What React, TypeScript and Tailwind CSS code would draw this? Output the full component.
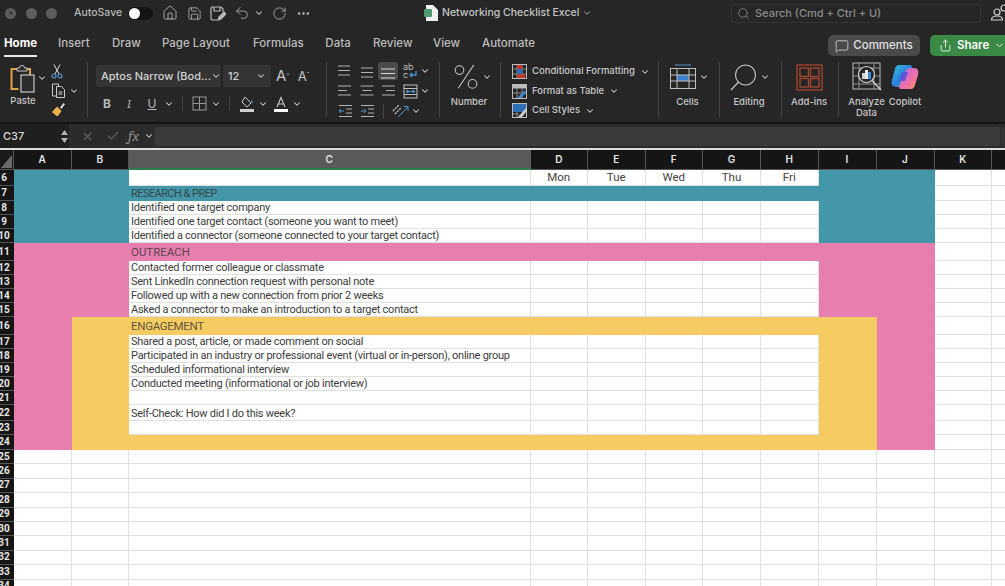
import { ChevronDown, Home, Save, Undo2, RotateCw, Ellipsis, Search, MessageSquare, Share, X, Check } from "lucide-react";
import type { ReactNode } from "react";

const ui = "font-['Inter','Liberation_Sans',sans-serif]";
const cols = "grid grid-cols-[14px_57.5px_57.5px_401.5px_57.5px_57.5px_57.5px_58px_57.5px_58px_58px_57.5px_57.5px]";

const rows = [
  { n: 6, h: "h-[16px]" },
  { n: 7, h: "h-[15px]", head: "RESEARCH & PREP", headClass: "text-[11px] tracking-[-0.55px]" },
  { n: 8, h: "h-[14px]", text: "Identified one target company" },
  { n: 9, h: "h-[14px]", text: "Identified one target contact (someone you want to meet)" },
  { n: 10, h: "h-[14px]", text: "Identified a connector (someone connected to your target contact)" },
  { n: 11, h: "h-[18px]", head: "OUTREACH", headClass: "pt-[2px] text-[11.5px]" },
  { n: 12, h: "h-[14px]", text: "Contacted former colleague or classmate" },
  { n: 13, h: "h-[14px]", text: "Sent LinkedIn connection request with personal note" },
  { n: 14, h: "h-[14px]", text: "Followed up with a new connection from prior 2 weeks" },
  { n: 15, h: "h-[14px]", text: "Asked a connector to make an introduction to a target contact" },
  { n: 16, h: "h-[18px]", head: "ENGAGEMENT", headClass: "pt-[2px] text-[11.5px] tracking-[-0.3px]" },
  { n: 17, h: "h-[14px]", text: "Shared a post, article, or made comment on social" },
  { n: 18, h: "h-[14px]", text: "Participated in an industry or professional event (virtual or in-person), online group" },
  { n: 19, h: "h-[14px]", text: "Scheduled informational interview" },
  { n: 20, h: "h-[14px]", text: "Conducted meeting (informational or job interview)" },
  { n: 21, h: "h-[14px]" },
  { n: 22, h: "h-[16px]", text: "Self-Check: How did I do this week?" },
  { n: 23, h: "h-[14px]" },
  { n: 24, h: "h-[15px]" },
  ...[25, 26, 27, 28, 29, 30, 31, 32, 33, 34].map((n) => ({ n, h: "h-[14.4px]" })),
] as { n: number; h: string; head?: string; headClass?: string; text?: string }[];

const days: Record<number, string> = { 4: "Mon", 5: "Tue", 6: "Wed", 7: "Thu", 8: "Fri" };
const letters = ["A", "B", "C", "D", "E", "F", "G", "H", "I", "J", "K", ""];

const teal = "bg-[#4397a8]";
const pink = "bg-[#e67fae]";
const yellow = "bg-[#f5cb62]";

// col index: 1 = A ... 10 = J
function fill(row: number, col: number) {
  if (row >= 25 || col > 10) return "";
  if (row <= 10) {
    if (col <= 2 || col >= 9 || row === 7) return teal;
    return "";
  }
  if (row <= 15) {
    if (col <= 2 || col >= 9 || row === 11) return pink;
    return "";
  }
  if (col === 1 || col === 10) return pink;
  if (col === 2 || col === 9 || row === 16 || row === 24) return yellow;
  return "";
}

function Chev({ className = "" }: { className?: string }) {
  return <ChevronDown size={10} strokeWidth={2.5} className={`shrink-0 text-[#d0d0d0] ${className}`} />;
}

function Sep() {
  return <div className="h-[55px] w-px shrink-0 self-center bg-[#454545]" />;
}

// fixed width box that centers an icon
function Slot({ w, children, className = "" }: { w: string; children: ReactNode; className?: string }) {
  return <div className={`flex shrink-0 items-center justify-center ${w} ${className}`}>{children}</div>;
}

function Lines({ w = [14, 14, 14], align = "l", color = "#b0b0b0" }: { w?: number[]; align?: "l" | "c" | "r"; color?: string }) {
  return (
    <svg width="16" height="14" viewBox="0 0 16 14">
      {w.map((len, i) => {
        const x = align === "l" ? 1 : align === "c" ? 8 - len / 2 : 15 - len;
        return <rect key={i} x={x} y={1.5 + i * 4.5} width={len} height="1" fill={color} />;
      })}
    </svg>
  );
}

function PasteIcon() {
  return (
    <svg width="26" height="28" viewBox="0 0 26 28" fill="none">
      <path d="M7 4H1.500v20h7" stroke="#e0a24a" strokeWidth="2" />
      <path d="M16 4h4v6" stroke="#e0a24a" strokeWidth="2" />
      <path d="M7 3h2.500a2.500 2.500 0 0 1 5 0H17v3H7z" stroke="#c9c9c9" strokeWidth="1" fill="#262626" />
      <rect x="11" y="10" width="13" height="17" fill="#2c2c2c" stroke="#c9c9c9" strokeWidth="1.200" />
    </svg>
  );
}

function ScissorsIcon() {
  return (
    <svg width="12" height="15" viewBox="0 0 12 15" fill="none">
      <path d="M3 0.500 8 10M9 0.500 4 10" stroke="#d8d8d8" />
      <circle cx="3" cy="12" r="2" stroke="#5d96cf" strokeWidth="1.200" />
      <circle cx="9" cy="12" r="2" stroke="#5d96cf" strokeWidth="1.200" />
    </svg>
  );
}

function CopyIcon() {
  return (
    <svg width="16" height="15" viewBox="0 0 16 15" fill="none" stroke="#c9c9c9">
      <path d="M1.500 1h6v12h-6z" />
      <path d="M5.500 3.500h5l3 3v8h-8z" fill="#262626" />
      <path d="M7.500 9h4M7.500 11h4" />
    </svg>
  );
}

function BrushIcon() {
  return (
    <svg width="15" height="15" viewBox="0 0 15 15" fill="none">
      <path d="M9 5.500 12.500 1l1.500 1.300L10.500 7" fill="#d8d8d8" />
      <path d="M6 4.500 10.500 9 7 14H5.500L1 10z" fill="#eab04f" />
    </svg>
  );
}

function BordersIcon() {
  return (
    <svg width="15" height="15" viewBox="0 0 15 15" fill="none" stroke="#9a9a9a">
      <rect x="1" y="1" width="13" height="13" />
      <path d="M7.500 1v13M1 7.500h13" />
    </svg>
  );
}

function FillIcon() {
  return (
    <svg width="16" height="16" viewBox="0 0 16 16" fill="none">
      <path d="M6 1 12 7l-4 4-5-5z" stroke="#c9c9c9" />
      <path d="M12.500 3.500c1 1.500 2 2.500 1 3.500s-1.500-.5-1-3.500z" fill="#4a90c9" />
      <rect x="1" y="13" width="14" height="3" fill="#d0d0d0" />
    </svg>
  );
}

function FontColorIcon() {
  return (
    <svg width="16" height="16" viewBox="0 0 16 16" fill="none">
      <path d="M4 11 8 1.500 12 11M5.500 8h5" stroke="#c9c9c9" strokeWidth="1.100" />
      <rect x="1" y="13" width="14" height="3" fill="#fff" />
    </svg>
  );
}

function WrapIcon() {
  return (
    <svg width="16" height="17" viewBox="0 0 16 17" fill="none">
      <text x="1" y="7" fontSize="9" fill="#bdbdbd">ab</text>
      <text x="1" y="15" fontSize="9" fill="#bdbdbd">c</text>
      <path d="M14 8v4H8m2-2-2 2 2 2" stroke="#4a90c9" strokeWidth="1.300" />
    </svg>
  );
}

function MergeIcon() {
  return (
    <svg width="15" height="15" viewBox="0 0 15 15" fill="none">
      <rect x="1" y="1" width="13" height="13" stroke="#bdbdbd" />
      <path d="M1 4.500h13M1 10.500h13" stroke="#bdbdbd" />
      <path d="M3 7.500h9M3 7.500l2-1.500v3zM12 7.500l-2-1.500v3z" stroke="#4a90c9" />
    </svg>
  );
}

function IndentIcon({ flip = false }: { flip?: boolean }) {
  return (
    <svg width="15" height="14" viewBox="0 0 15 14" fill="none">
      <path d="M1 1.500h13M8 5h6M8 9h6M1 12.500h13" stroke="#b0b0b0" />
      <path d={flip ? "M1 7h5M4 5l2 2-2 2" : "M6 7H1M3 5 1 7l2 2"} stroke="#4a90c9" />
    </svg>
  );
}

function OrientIcon() {
  return (
    <svg width="18" height="16" viewBox="0 0 18 16" fill="none">
      <path d="M1 8 7 2M3 11l6-6" stroke="#bdbdbd" strokeWidth="1.400" strokeDasharray="2 1" />
      <path d="M6 14 16 4M11.500 3.500H16V8" stroke="#4a90c9" />
    </svg>
  );
}

function GridStyle({ kind }: { kind: "cond" | "table" | "cell" }) {
  return (
    <svg width="15" height="15" viewBox="0 0 15 15" fill="none">
      <rect x="0.500" y="0.500" width="14" height="14" stroke="#bdbdbd" />
      {kind === "cond" ? (
        <>
          <path d="M5 1v13M10 1v13M1 5h13M1 10h13" stroke="#8a8a8a" />
          <rect x="5" y="1" width="5" height="4" fill="#c0392b" />
          <rect x="5" y="5" width="5" height="5" fill="#2f6fb8" />
          <rect x="5" y="10" width="8" height="4" fill="#c0392b" />
        </>
      ) : kind === "table" ? (
        <>
          <rect x="1" y="1" width="13" height="3.500" fill="#bdbdbd" />
          <path d="M5 4v10M10 4v10M1 9h13" stroke="#8a8a8a" />
          <path d="M5 14 13 6l1 3-5 5z" fill="#3f86c9" />
        </>
      ) : (
        <>
          <rect x="1" y="1" width="13" height="8" fill="#2f6fb8" />
          <path d="M5 9v5M1 11h6" stroke="#8a8a8a" />
          <path d="M6 14 14 5v4l-4 5z" fill="#d0d0d0" />
        </>
      )}
    </svg>
  );
}

function CellsIcon() {
  return (
    <svg width="26" height="26" viewBox="0 0 26 26" fill="none">
      <path d="M6 1h14M6 0v2M20 0v2" stroke="#4a90c9" />
      <rect x="0.500" y="4.500" width="25" height="20" stroke="#bdbdbd" />
      <rect x="7" y="11" width="12" height="6" fill="#3f7fd0" />
      <path d="M7 5v19M19 5v19M1 11h24M1 17h24" stroke="#bdbdbd" />
    </svg>
  );
}

function EditingIcon() {
  return (
    <svg width="27" height="27" viewBox="0 0 27 27" fill="none" stroke="#c9c9c9" strokeWidth="1.100">
      <circle cx="15.500" cy="11" r="10" />
      <path d="M8.500 18 1 26" />
    </svg>
  );
}

function AddinsIcon() {
  return (
    <svg width="27" height="27" viewBox="0 0 27 27" fill="none" stroke="#a8452c" strokeWidth="1.300">
      <rect x="1" y="1" width="25" height="25" />
      <rect x="4" y="4" width="8.500" height="8.500" />
      <rect x="14.500" y="4" width="8.500" height="8.500" />
      <rect x="4" y="14.500" width="8.500" height="8.500" />
      <rect x="14.500" y="14.500" width="8.500" height="8.500" />
    </svg>
  );
}

function AnalyzeIcon() {
  return (
    <svg width="30" height="30" viewBox="0 0 30 30" fill="none">
      <rect x="1" y="1" width="27" height="26" stroke="#bdbdbd" />
      <path d="M1 6h27M1 22h27M7 1v26M22 1v26M1 14h6M22 14h6" stroke="#8f8f8f" />
      <circle cx="14.500" cy="12.500" r="8" fill="#262626" stroke="#d5d5d5" strokeWidth="1.200" />
      <rect x="10" y="11" width="3" height="6" fill="#d0d0d0" />
      <rect x="13" y="8" width="3" height="9" fill="#e8e8e8" />
      <rect x="16" y="10" width="3" height="7" fill="#3f86d8" />
      <path d="M20 18.500 29 28" stroke="#d5d5d5" strokeWidth="1.300" />
    </svg>
  );
}

function CopilotIcon() {
  return (
    <svg width="28" height="26" viewBox="0 0 28 26">
      <defs>
        <linearGradient id="cpA" x1="0" y1="0" x2="1" y2="1">
          <stop offset="0" stopColor="#37c3d8" />
          <stop offset="0.55" stopColor="#2b7de0" />
          <stop offset="1" stopColor="#9ad05a" />
        </linearGradient>
        <linearGradient id="cpB" x1="0" y1="0" x2="1" y2="1">
          <stop offset="0" stopColor="#b06fe8" />
          <stop offset="0.6" stopColor="#ee6fa8" />
          <stop offset="1" stopColor="#f6a04d" />
        </linearGradient>
      </defs>
      <path d="M8 1h11c2 0 2.500 2 1.500 4L15 19c-1 3-3 4-5 4H5c-4 0-5-3-4-7L4 5c.7-2.500 2-4 4-4z" fill="url(#cpA)" />
      <path d="M20 25H10c-2 0-2-2-1.500-3.500L14 8c1-3 3-4 5-4h4c4 0 5 3 4 7l-3 10c-.7 2.500-2 4-4 4z" fill="url(#cpB)" />
      <path d="M11 8h6l-3 9H8z" fill="#5a4fd8" opacity="0.85" />
    </svg>
  );
}

function ExcelDocIcon() {
  return (
    <svg width="14" height="16" viewBox="0 0 14 16" className="shrink-0">
      <path d="M2 0h7l5 5v11H2z" fill="#f2f2f2" />
      <rect x="0" y="4" width="8" height="8" rx="1" fill="#4f9a6e" />
    </svg>
  );
}

function PeopleIcon() {
  return (
    <svg width="20" height="18" viewBox="0 0 20 18" fill="none" stroke="#d0d0d0" strokeWidth="1.200">
      <circle cx="7" cy="8" r="3" />
      <path d="M1.500 16c0-2.500 2-4 5.500-4s5.500 1.500 5.500 4z" />
      <circle cx="14" cy="4" r="3" />
    </svg>
  );
}

function TitleBar() {
  return (
    <div className="flex h-[26px] items-center text-[#b8b8b8]">
      <div className="ml-[5px] flex w-[52px] shrink-0 justify-between">
        <span className="flex size-[11px] items-center justify-center rounded-full bg-[#5d5d5d]">
          <span className="size-[4px] rounded-full bg-[#3c3c3c]" />
        </span>
        <span className="size-[11px] rounded-full bg-[#5d5d5d]" />
        <span className="size-[11px] rounded-full bg-[#5d5d5d]" />
      </div>
      <span className="ml-[17px] w-[50px] shrink-0 text-[10.5px] font-medium">AutoSave</span>
      <div className="ml-[4px] flex h-[13px] w-[25px] shrink-0 items-center rounded-full bg-[#141414]">
        <span className="ml-[1px] size-[11px] rounded-full bg-white" />
      </div>
      <Slot w="w-[16px]" className="ml-[9px]"><Home size={16} strokeWidth={1.3} /></Slot>
      <Slot w="w-[16px]" className="ml-[8px]"><Save size={15} strokeWidth={1.3} /></Slot>
      <Slot w="w-[16px]" className="ml-[8px]">
        <svg width="16" height="15" viewBox="0 0 16 15" fill="none" stroke="currentColor" strokeWidth="1.200">
          <path d="M13 6V3l-2-2H2L1 2v11l1 1h5" />
          <path d="M4 1v4h6V1" />
          <path d="M8 14l1-3 5-5 2 2-5 5z" fill="currentColor" />
        </svg>
      </Slot>
      <Slot w="w-[16px]" className="ml-[8px]"><Undo2 size={18} strokeWidth={1.2} /></Slot>
      <Slot w="w-[10px]" className="ml-[4px]"><Chev /></Slot>
      <Slot w="w-[16px]" className="ml-[7px]"><RotateCw size={15} strokeWidth={1.3} /></Slot>
      <Slot w="w-[16px]" className="ml-[8px]"><Ellipsis size={15} /></Slot>
      <div className="ml-[113px] flex w-[170px] shrink-0 items-center text-[10.5px] font-medium text-[#c4c4c4]">
        <ExcelDocIcon />
        <span className="ml-[4px] whitespace-nowrap">Networking Checklist Excel</span>
        <ChevronDown size={10} className="ml-[3px] shrink-0" />
      </div>
      <div className="ml-[137px] flex h-[19px] w-[250px] shrink-0 items-center rounded-[4px] border border-[#333] pl-[5px] text-[11px] font-medium text-[#8c8c8c]">
        <Search size={13} strokeWidth={1.5} />
        <span className="ml-[5px] whitespace-nowrap">Search (Cmd + Ctrl + U)</span>
      </div>
      <div className="ml-[9px] shrink-0"><PeopleIcon /></div>
    </div>
  );
}

function TabBar() {
  const tabs = [
    ["Insert", "w-[31px]", "ml-[21px]"],
    ["Draw", "w-[28px]", "ml-[23px]"],
    ["Page Layout", "w-[67px]", "ml-[22px]"],
    ["Formulas", "w-[50px]", "ml-[24px]"],
    ["Data", "w-[26px]", "ml-[22px]"],
    ["Review", "w-[38px]", "ml-[22px]"],
    ["View", "w-[26px]", "ml-[22px]"],
    ["Automate", "w-[53px]", "ml-[23px]"],
  ];
  return (
    <div className="flex h-[30px] items-start text-[11.5px] font-medium text-[#bdbdbd]">
      <div className="ml-[4px] mt-[9px] w-[33px] shrink-0 border-b-2 border-[#e8e8e8] pb-[3px] text-center font-bold text-white">Home</div>
      {tabs.map(([t, w, ml]) => (
        <div key={t} className={`mt-[9px] shrink-0 whitespace-nowrap text-center ${w} ${ml}`}>{t}</div>
      ))}
      <div className="ml-[293px] mt-[9px] flex h-[21px] w-[92px] shrink-0 items-center justify-center gap-[4px] rounded-[5px] bg-[#4a4a4a] text-[#e0e0e0]">
        <MessageSquare size={14} strokeWidth={1.3} />
        <span>Comments</span>
      </div>
      <div className="ml-[10px] mt-[9px] flex h-[21px] w-[80px] shrink-0 items-center rounded-l-[5px] bg-[#3a8a45] pl-[9px] font-semibold text-white">
        <Share size={13} strokeWidth={1.5} />
        <span className="ml-[5px]">Share</span>
        <ChevronDown size={11} className="ml-[5px]" />
      </div>
    </div>
  );
}

function Clipboard() {
  return (
    <div className="flex w-[87px] shrink-0">
      <div className="ml-[8px] mt-[9px] flex w-[30px] flex-col items-center">
        <PasteIcon />
        <span className="mt-[1px] text-[9.5px] font-medium">Paste</span>
      </div>
      <Chev className="ml-[-1px] mt-[17px]" />
      <div className="ml-[4px] mt-[8px] flex flex-col">
        <ScissorsIcon />
        <div className="mt-[4px] flex items-center gap-[2px]"><CopyIcon /><Chev /></div>
        <div className="mt-[4px]"><BrushIcon /></div>
      </div>
    </div>
  );
}

function FontGroup() {
  return (
    <div className="w-[238px] shrink-0 pl-[8px] pt-[9px]">
      <div className="flex items-center">
        <div className="flex h-[22px] w-[125px] items-center justify-between rounded-[3px] bg-[#343434] px-[5px] text-[11px] font-medium text-[#d0d0d0]">
          <span className="whitespace-nowrap">Aptos Narrow (Bod...</span><Chev />
        </div>
        <div className="ml-[2px] flex h-[22px] w-[48px] items-center justify-between rounded-[3px] bg-[#343434] px-[5px] text-[11px] font-medium text-[#d0d0d0]">
          <span>12</span><Chev />
        </div>
        <span className="ml-[5px] text-[15px] text-[#c4c4c4]">A<sup className="text-[7px] text-[#7fa9d6]">^</sup></span>
        <span className="ml-[8px] text-[13px] text-[#c4c4c4]">A<sup className="text-[7px] text-[#7fa9d6]">ˇ</sup></span>
      </div>
      <div className="mt-[6px] flex h-[20px] items-center text-[12px] text-[#b5b5b5]">
        <Slot w="w-[10px]" className="ml-[6px] font-bold">B</Slot>
        <Slot w="w-[10px]" className="ml-[12px] font-serif italic">I</Slot>
        <Slot w="w-[10px]" className="ml-[13px] underline">U</Slot>
        <Chev className="ml-[7px]" />
        <div className="ml-[8px] h-[15px] w-px bg-[#454545]" />
        <Slot w="w-[15px]" className="ml-[9px]"><BordersIcon /></Slot>
        <Chev className="ml-[4px]" />
        <div className="ml-[8px] h-[15px] w-px bg-[#454545]" />
        <Slot w="w-[16px]" className="ml-[9px]"><FillIcon /></Slot>
        <Chev className="ml-[3px]" />
        <Slot w="w-[16px]" className="ml-[5px]"><FontColorIcon /></Slot>
        <Chev className="ml-[3px]" />
      </div>
    </div>
  );
}

function AlignGroup() {
  return (
    <div className="flex w-[112px] shrink-0 flex-col pl-[10px] pt-[6px]">
      <div className="flex h-[18px] items-center">
        <Slot w="w-[16px]"><Lines w={[12, 12, 12]} /></Slot>
        <Slot w="w-[16px]" className="ml-[6px]"><div className="pt-[3px]"><Lines w={[12, 12, 12]} align="c" /></div></Slot>
        <Slot w="w-[20px]" className="ml-[3px] h-[18px] rounded-[3px] bg-[#4b4b4b]"><div className="pt-[5px]"><Lines w={[14, 14, 14]} align="c" color="#d8d8d8" /></div></Slot>
        <Slot w="w-[16px]" className="ml-[4px]"><WrapIcon /></Slot>
        <Chev className="ml-[2px]" />
      </div>
      <div className="mt-[2px] flex h-[18px] items-center">
        <Slot w="w-[16px]"><Lines w={[13, 9, 13]} /></Slot>
        <Slot w="w-[16px]" className="ml-[6px]"><Lines w={[13, 9, 13]} align="c" /></Slot>
        <Slot w="w-[16px]" className="ml-[5px]"><Lines w={[13, 9, 13]} align="r" /></Slot>
        <Slot w="w-[16px]" className="ml-[6px]"><MergeIcon /></Slot>
        <Chev className="ml-[2px]" />
      </div>
      <div className="mt-[2px] flex h-[18px] items-center">
        <Slot w="w-[16px]"><IndentIcon /></Slot>
        <Slot w="w-[16px]" className="ml-[6px]"><IndentIcon flip /></Slot>
        <div className="ml-[8px] h-[15px] w-px bg-[#454545]" />
        <Slot w="w-[18px]" className="ml-[8px]"><OrientIcon /></Slot>
        <Chev className="ml-[1px]" />
      </div>
    </div>
  );
}

function BigButton({ label, width, icon, chev = true, pl }: { label: ReactNode; width: string; icon: ReactNode; chev?: boolean; pl: string }) {
  return (
    <div className={`flex shrink-0 flex-col items-center ${width}`}>
      <div className={`flex h-[36px] items-center ${pl}`}>
        {icon}
        {chev && <Chev className="ml-[3px]" />}
      </div>
      <div className="mt-[1px] text-center text-[9.5px] font-medium leading-[11px]">{label}</div>
    </div>
  );
}

function StylesGroup() {
  const items: ["cond" | "table" | "cell", string][] = [
    ["cond", "Conditional Formatting"],
    ["table", "Format as Table"],
    ["cell", "Cell Styles"],
  ];
  return (
    <div className="flex w-[157px] shrink-0 flex-col gap-[4.5px] pl-[11px] pt-[8px]">
      {items.map(([k, t]) => (
        <div key={k} className="flex h-[15px] items-center">
          <GridStyle kind={k} />
          <span className="ml-[5px] whitespace-nowrap text-[9.5px] font-medium">{t}</span>
          <Chev className="ml-[5px]" />
        </div>
      ))}
    </div>
  );
}

function Ribbon() {
  return (
    <div className="flex h-[68px] border-b-2 border-[#141414] text-[#c8c8c8]">
      <Clipboard />
      <Sep />
      <FontGroup />
      <Sep />
      <AlignGroup />
      <Sep />
      <div className="pr-[2px] pt-[3px]">
        <BigButton
          label="Number"
          width="w-[58px]"
          pl="pl-[6px]"
          icon={
            <svg width="26" height="26" viewBox="0 0 28 30" fill="none" stroke="#c4c4c4" strokeWidth="1.200">
              <circle cx="6.500" cy="7" r="5" />
              <path d="M23 1 5 28" />
              <circle cx="21.500" cy="23" r="5" />
            </svg>
          }
        />
      </div>
      <Sep />
      <StylesGroup />
      <Sep />
      <div className="pr-[3px] pt-[3px]"><BigButton label="Cells" width="w-[57px]" pl="pl-[4px]" icon={<CellsIcon />} /></div>
      <Sep />
      <div className="pr-[3px] pt-[3px]"><BigButton label="Editing" width="w-[58px]" pl="pl-[2px]" icon={<EditingIcon />} /></div>
      <Sep />
      <div className="pr-[2px] pt-[3px]"><BigButton label="Add-ins" width="w-[54px]" pl="" chev={false} icon={<AddinsIcon />} /></div>
      <Sep />
      <div className="flex pt-[3px]">
        <BigButton label={<>Analyze<br />Data</>} width="w-[55px]" pl="" chev={false} icon={<AnalyzeIcon />} />
        <BigButton label="Copilot" width="w-[22px]" pl="" chev={false} icon={<CopilotIcon />} />
      </div>
    </div>
  );
}

function FormulaBar() {
  return (
    <div className="flex h-[24px] items-center bg-[#2b2b2b]">
      <div className="flex h-full w-[69px] items-center justify-between bg-[#1f1f1f] pl-[3px] pr-[1px] text-[11px] font-medium text-[#d8d8d8]">
        <span>C37</span>
        <svg width="7" height="15" viewBox="0 0 7 15" fill="#b0b0b0"><path d="M3.500 1 7 6H0zM3.500 14 0 9h7z" /></svg>
      </div>
      <Slot w="w-[14px]" className="ml-[11px]"><X size={13} strokeWidth={2} className="text-[#626262]" /></Slot>
      <Slot w="w-[14px]" className="ml-[12px]"><Check size={14} strokeWidth={2} className="text-[#626262]" /></Slot>
      <span className="ml-[8px] w-[15px] font-serif text-[15px] italic text-[#8e8e8e]">fx</span>
      <Chev className="ml-[1px]" />
      <div className="ml-[1px] h-[19px] flex-1 rounded-[3px] bg-[#3a3a3a]" />
      <div className="ml-[1px] h-[19px] w-[4px] rounded-l-[3px] bg-[#333]" />
    </div>
  );
}

function ColumnHeaders() {
  return (
    <div className={`${cols} h-[20px] bg-[#151515] text-[10px] font-semibold text-[#e4e4e4]`}>
      <div className="border-r border-b border-[#555] bg-[#1a1a1a]">
        <svg width="13" height="19" viewBox="0 0 13 19"><path d="M12 5v13H1z" fill="#6a6a6a" /></svg>
      </div>
      {letters.map((l) =>
        l === "C" ? (
          <div key={l} className="flex items-center justify-center border-b-2 border-[#2f7d4f] bg-[#5a5a5a] pr-[1px]">{l}</div>
        ) : (
          <div key={l} className="flex items-center justify-center border-r border-b border-[#555]">{l}</div>
        ),
      )}
    </div>
  );
}

function SheetRow({ row }: { row: (typeof rows)[number] }) {
  return (
    <div className={`${cols} ${row.h} overflow-hidden`}>
      <div className="flex items-center border-b border-[#555] bg-[#151515] text-[10px] font-bold leading-none text-[#e4e4e4]">
        <span className="flex w-[8px] justify-center whitespace-nowrap">{row.n}</span>
      </div>
      {letters.map((_, i) => {
        const col = i + 1;
        const bg = fill(row.n, col);
        let content: ReactNode = null;
        if (col === 3 && row.head) {
          content = <span className={`whitespace-nowrap pl-[2px] leading-none text-[#333]/80 ${row.headClass}`}>{row.head}</span>;
        } else if (col === 3 && row.text) {
          content = <span className={`whitespace-nowrap pl-[2px] text-[11px] leading-none tracking-[-0.25px] text-[#3c3c3c] ${row.n === 22 ? "pt-[2px]" : ""}`}>{row.text}</span>;
        } else if (row.n === 6 && days[col]) {
          content = <span className="w-full text-center text-[11.5px] leading-none text-[#444]">{days[col]}</span>;
        }
        return (
          <div key={i} className={`flex min-h-0 items-center ${bg || "border-r border-b border-[#e0e0e0] bg-white"}`}>
            {content}
          </div>
        );
      })}
    </div>
  );
}

export default function App() {
  return (
    <div className={`h-[586px] w-[1005px] overflow-hidden bg-[#262626] ${ui}`}>
      <TitleBar />
      <TabBar />
      <Ribbon />
      <FormulaBar />
      <div className="h-[2px] bg-[#dcdcdc]" />
      <ColumnHeaders />
      <div className="font-['Roboto','Liberation_Sans',sans-serif]">
        {rows.map((r) => (
          <SheetRow key={r.n} row={r} />
        ))}
      </div>
    </div>
  );
}
